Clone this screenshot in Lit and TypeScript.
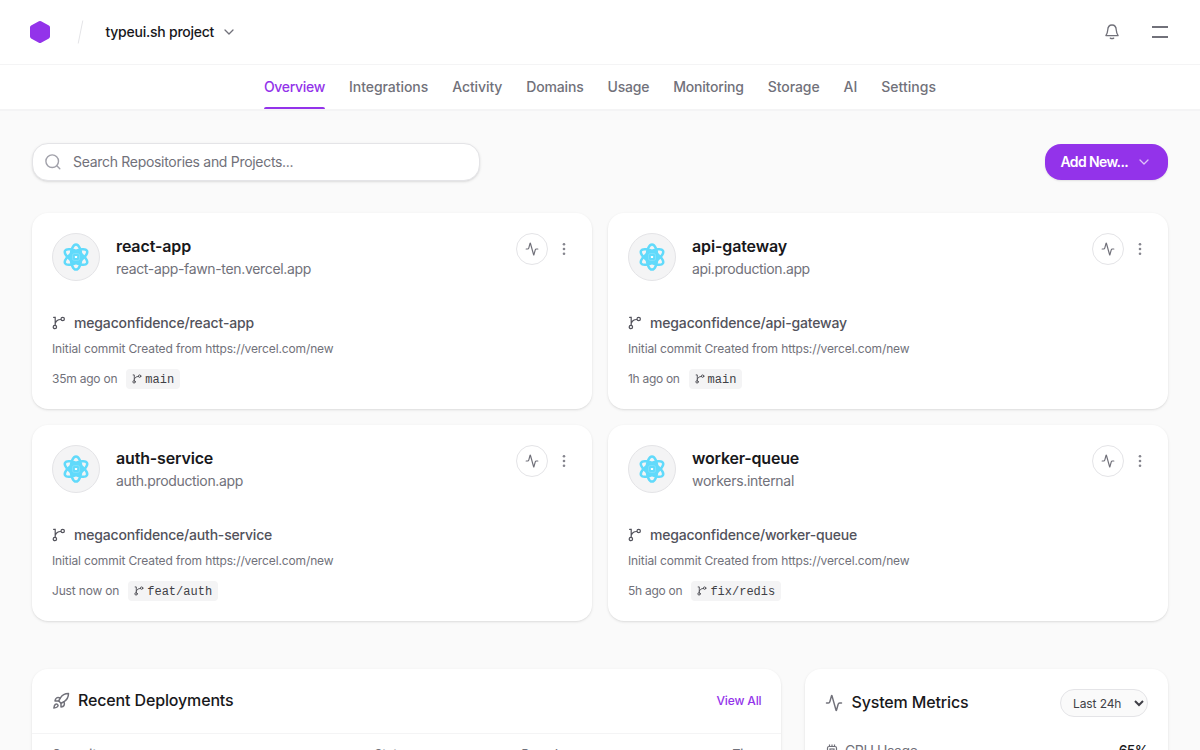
import { LitElement, html, css, svg } from "lit";

const chevron = html`<svg class="chev" viewBox="0 0 10 6" width="10" height="6" fill="none" stroke="currentColor" stroke-width="1.3" stroke-linecap="round" stroke-linejoin="round"><path d="M1 1l4 4 4-4"/></svg>`;
const pulsePath = svg`<path d="M22 12h-2.48a2 2 0 0 0-1.93 1.46l-2.35 8.36a.25.25 0 0 1-.48 0L9.24 2.18a.25.25 0 0 0-.48 0l-2.35 8.36A2 2 0 0 1 4.49 12H2"/>`;
const pulse = (size: number, w: number) => html`<svg viewBox="0 0 24 24" width=${size} height=${size} fill="none" stroke="currentColor" stroke-width=${w} stroke-linecap="round" stroke-linejoin="round">${pulsePath}</svg>`;
const branch = (size: number) => html`<svg viewBox="0 0 14 14" width=${size} height=${size} fill="none" stroke="currentColor" stroke-width="1.2" stroke-linecap="round"><path d="M1.600 1.300h1.600V9.200M8.600 3.500C6 3.600 4.200 4.600 3.300 7.200"/><circle cx="2.900" cy="11" r="1.700"/><circle cx="10.700" cy="3" r="1.700"/></svg>`;
const atom = html`<svg viewBox="-16 -16 32 32" width="32" height="32" fill="none" stroke="#61dafb" stroke-width="2.500"><g><ellipse rx="5.300" ry="12.600"/><ellipse rx="5.300" ry="12.600" transform="rotate(60)"/><ellipse rx="5.300" ry="12.600" transform="rotate(120)"/></g><circle r="7.200" fill="#61dafb" stroke="none"/><rect x="-3.500" y="-3.500" width="7" height="7" rx="2" stroke="#8ce3fb" stroke-width=".7"/><rect x="-1.100" y="-1.100" width="2.200" height="2.200" rx=".5" fill="#fff" stroke="none"/></svg>`;

interface Label { text: string; ls: number }
interface Project { name: Label; url: Label; repo: Label; ago: Label; branch: string }
const tracked = (cls: string, l: Label) => html`<span class=${cls} style="letter-spacing:${l.ls}px">${l.text}</span>`;

class ProjectCard extends LitElement {
  static properties = { project: { attribute: false } };
  declare project: Project;
  static styles = css`
    :host { display: block; height: 196px; box-sizing: border-box; padding: 20px; background: #fff; border-radius: 16px; box-shadow: 0 1px 3px rgba(0,0,0,.1), 0 1px 2px -1px rgba(0,0,0,.1); }
    svg { display: block; flex: none; }
    .top { display: flex; height: 48px; }
    .avatar { box-sizing: border-box; width: 48px; height: 48px; border-radius: 50%; border: 1px solid #e4e4e7; background: #f4f4f5; display: grid; place-items: center; }
    .names { display: flex; flex-direction: column; margin-left: 16px; flex: 1; padding-top: 2px; }
    .name { font-size: 16px; line-height: 22px; padding-bottom: 2px; font-weight: 600; color: #18181b; }
    .url { font-size: 14px; line-height: 20px; color: #71717a; }
    .tools { display: flex; height: 32px; align-items: center; gap: 14px; padding-right: 6px; color: #71717a; }
    .act { box-sizing: border-box; width: 32px; height: 32px; border: 1px solid #e4e4e7; border-radius: 50%; display: grid; place-items: center; }
    .dots { color: #85858e; }
    .repo { display: flex; align-items: center; gap: 8px; margin-top: 32px; height: 20px; font-size: 14px; font-weight: 500; color: #52525b; }
    .msg { margin-top: 8px; font-size: 12px; line-height: 16px; letter-spacing: -.125px; color: #71717a; }
    .meta { display: flex; align-items: center; gap: 9px; margin-top: 12px; height: 20px; font-size: 12px; color: #71717a; }
    .tag { box-sizing: border-box; display: flex; align-items: center; gap: 3px; height: 20px; padding: 0 6px; border-radius: 4px; background: #f4f4f5; color: #3f3f46; font: 12px "Liberation Mono", monospace; }
    .tag span { padding-top: 2px; }
  `;
  render() {
    const p = this.project;
    return html`
      <div class="top">
        <div class="avatar">${atom}</div>
        <div class="names">${tracked("name", p.name)}${tracked("url", p.url)}</div>
        <div class="tools">
          <div class="act">${pulse(14, 2)}</div>
          <svg class="dots" viewBox="0 0 4 14" width="4" height="14" fill="currentColor"><circle cx="2" cy="2.200" r="1.300"/><circle cx="2" cy="7" r="1.300"/><circle cx="2" cy="11.800" r="1.300"/></svg>
        </div>
      </div>
      <div class="repo">${branch(14)}${tracked("", p.repo)}</div>
      <div class="msg">Initial commit Created from https://vercel.com/new</div>
      <div class="meta">${tracked("", p.ago)}<span class="tag">${branch(10)}<span>${p.branch}</span></span></div>`;
  }
}
customElements.define("project-card", ProjectCard);

const l = (text: string, ls: number): Label => ({ text, ls });
const tabs = [l("Overview", -.3), l("Integrations", -.05), l("Activity", -.1), l("Domains", -.17), l("Usage", -.22), l("Monitoring", -.19), l("Storage", -.08), l("AI", -.1), l("Settings", .05)];
const projects: Project[] = [
  { name: l("react-app", -.122), url: l("react-app-fawn-ten.vercel.app", -.334), repo: l("megaconfidence/react-app", -.153), ago: l("35m ago on", -.22), branch: "main" },
  { name: l("api-gateway", -.131), url: l("api.production.app", -.365), repo: l("megaconfidence/api-gateway", -.159), ago: l("1h ago on", -.3), branch: "main" },
  { name: l("auth-service", -.165), url: l("auth.production.app", -.345), repo: l("megaconfidence/auth-service", -.19), ago: l("Just now on", -.17), branch: "feat/auth" },
  { name: l("worker-queue", -.203), url: l("workers.internal", -.287), repo: l("megaconfidence/worker-queue", -.2), ago: l("5h ago on", -.26), branch: "fix/redis" },
];

class AppRoot extends LitElement {
  static styles = css`
    :host { display: block; height: 750px; overflow: hidden; background: #fafafa; font: 14px/20px Inter, sans-serif; color: #18181b; }
    svg { display: block; flex: none; }
    .bar { box-sizing: border-box; height: 65px; display: flex; align-items: center; padding: 0 32px 1px 30px; background: #fff; border-bottom: 1px solid #f4f4f5; }
    .slash { margin-left: 27px; }
    .team { margin-left: 21.500px; font-weight: 500; letter-spacing: -.24px; }
    .bar .chev { margin-left: 10px; color: #71717a; }
    .icons { margin-left: auto; display: flex; align-items: center; gap: 33px; color: #71717a; }
    nav { box-sizing: border-box; height: 46px; display: flex; justify-content: center; gap: 24px; background: #fff; border-bottom: 2px solid #f4f4f5; }
    .tab { position: relative; height: 44px; line-height: 43px; font-weight: 500; color: #71717a; white-space: nowrap; }
    .tab.on { color: #9333ea; }
    .tab.on::after { content: ""; position: absolute; left: 0; right: 0; bottom: 0; height: 2px; border-radius: 2px 2px 0 0; background: #9333ea; }
    main { padding: 32px 32px 0; }
    .tools { display: flex; justify-content: space-between; align-items: center; height: 38px; }
    .search { box-sizing: border-box; width: 448px; height: 38px; display: flex; align-items: center; gap: 12px; padding: 0 12px; border: 1px solid #e4e4e7; border-radius: 16px; background: #fff; color: #71717a; letter-spacing: -.3px; box-shadow: 0 1px 3px rgba(0,0,0,.1), 0 1px 2px -1px rgba(0,0,0,.1); }
    .search svg { color: #a1a1aa; }
    .add { box-sizing: border-box; display: flex; align-items: center; justify-content: space-between; width: 123px; height: 36px; padding: 0 19px 0 15.500px; border-radius: 16px; background: #9333ea; color: #fff; font-weight: 600; letter-spacing: -.61px; box-shadow: 0 1px 2px rgba(0,0,0,.1); }
    .add .chev { opacity: .7; }
    .cards { display: grid; grid-template-columns: 1fr 1fr; gap: 16px; margin-top: 32px; }
    .panels { display: grid; grid-template-columns: 749px 363px; gap: 24px; margin-top: 48px; }
    .panel { height: 400px; border-radius: 16px; background: #fff; box-shadow: 0 1px 3px rgba(0,0,0,.1), 0 1px 2px -1px rgba(0,0,0,.1); }
    .ph { box-sizing: border-box; height: 65px; display: flex; align-items: center; padding: 0 19.500px 1px 20px; border-bottom: 1px solid #f4f4f5; }
    .ph svg, .mh svg { color: #71717a; }
    .h { font-size: 16px; font-weight: 500; letter-spacing: -.145px; margin-left: 8px; padding-bottom: 2px; }
    .mh .h { margin-left: 8.500px; }
    .all { margin-left: auto; font-size: 12px; font-weight: 500; letter-spacing: -.135px; color: #9333ea; }
    .cols { display: grid; grid-template-columns: 322.5px 147px 1fr auto; padding: 12px 20px; font-size: 12px; line-height: 16px; font-weight: 500; color: #71717a; }
    .mh { display: flex; align-items: center; height: 28px; padding: 20px 20px 0; }
    select { box-sizing: border-box; margin-left: auto; width: 88px; height: 28px; padding: 0 0 0 8px; border: 1px solid #e4e4e7; border-radius: 14px; background: #fafafa; color: #3f3f46; font: 12px Inter, sans-serif; letter-spacing: -.1px; }
    .cpu { display: flex; align-items: center; gap: 7px; padding: 24px 20px 0 21px; color: #71717a; letter-spacing: -.38px; }
    .pct { margin-left: auto; font-weight: 500; color: #18181b; letter-spacing: -.7px; }
  `;
  render() {
    return html`
      <div class="bar">
        <svg viewBox="0 0 20 22" width="20" height="22" fill="#9333ea"><path d="M8.9.3a2.3 2.3 0 0 1 2.2 0l7.8 4.3A2.1 2.1 0 0 1 20 6.4v9.2a2.1 2.1 0 0 1-1.1 1.8l-7.8 4.3a2.3 2.3 0 0 1-2.2 0l-7.8-4.3A2.1 2.1 0 0 1 0 15.600V6.400a2.100 2.100 0 0 1 1.100-1.800z"/></svg>
        <svg class="slash" viewBox="0 0 7 24" width="7" height="24" stroke="#e4e4e7" stroke-width="1"><path d="M1.200 23.500L5.800.500"/></svg>
        <span class="team">typeui.sh project</span>${chevron}
        <div class="icons">
          <svg viewBox="0 0 14 16" width="14" height="16" fill="none" stroke="currentColor" stroke-width="1.3" stroke-linejoin="round" stroke-linecap="round"><path d="M.9 11.600C1.900 10 2.600 8.500 2.700 6.300 2.800 3 4.200 1 7 1s4.200 2 4.300 5.300c.1 2.200.8 3.700 1.800 5.300z"/><path d="M5.300 14.100q1.700 1 3.400 0"/></svg>
          <svg viewBox="0 0 16 12" width="16" height="12" fill="currentColor"><rect y="0" width="16" height="2"/><rect y="10" width="16" height="2"/></svg>
        </div>
      </div>
      <nav>${tabs.map((t, i) => tracked(i ? "tab" : "tab on", t))}</nav>
      <main>
        <div class="tools">
          <div class="search"><svg viewBox="0 0 16 16" width="16" height="16" fill="none" stroke="currentColor" stroke-width="1.4" stroke-linecap="round"><circle cx="7.200" cy="7.200" r="6.300"/><path d="M11.800 11.800l3 3"/></svg><span>Search Repositories and Projects...</span></div>
          <div class="add"><span>Add New...</span>${chevron}</div>
        </div>
        <div class="cards">${projects.map(p => html`<project-card .project=${p}></project-card>`)}</div>
        <div class="panels">
          <div class="panel">
            <div class="ph">
              <svg viewBox="0 0 24 24" width="18" height="18" fill="none" stroke="currentColor" stroke-width="2" stroke-linecap="round" stroke-linejoin="round"><path d="M4.500 16.500c-1.500 1.260-2 5-2 5s3.740-.5 5-2c.71-.84.7-2.130-.09-2.910a2.180 2.180 0 0 0-2.910-.09z"/><path d="m12 15-3-3a22 22 0 0 1 2-3.950A12.880 12.880 0 0 1 22 2c0 2.720-.78 7.500-6 11a22.350 22.350 0 0 1-4 2z"/><path d="M9 12H4s.55-3.030 2-4c1.620-1.080 5 0 5 0"/><path d="M12 15v5s3.030-.55 4-2c1.080-1.620 0-5 0-5"/></svg>
              <span class="h">Recent Deployments</span><span class="all">View All</span>
            </div>
            <div class="cols"><span>Commit</span><span>Status</span><span>Branch</span><span>Time</span></div>
          </div>
          <div class="panel">
            <div class="mh">${pulse(18, 2)}<span class="h">System Metrics</span><select><option>Last 24h</option></select></div>
            <div class="cpu"><svg viewBox="0 0 12 14" width="12" height="14" fill="none" stroke="currentColor" stroke-width="1.200"><rect x="1.500" y="2.500" width="9" height="9" rx="1.500"/><rect x="4" y="5" width="4" height="4"/><path d="M3.500 2.500v-2M6 2.500v-2M8.500 2.500v-2M3.500 11.500v2M6 11.500v2M8.500 11.500v2"/></svg><span>CPU Usage</span><span class="pct">65%</span></div>
          </div>
        </div>
      </main>`;
  }
}
customElements.define("app-root", AppRoot);
